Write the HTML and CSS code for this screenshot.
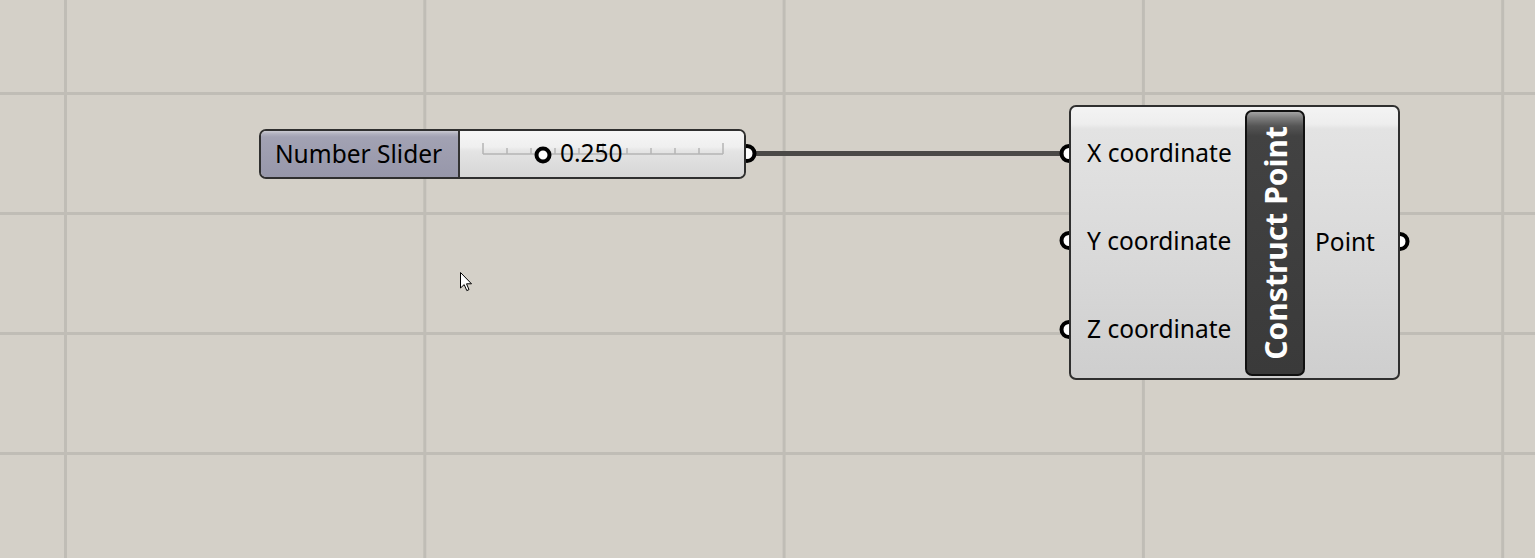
FILE: index.html
```html
<!DOCTYPE html>
<html lang="en">
<head>
<meta charset="utf-8">
<title>Canvas</title>
<link rel="stylesheet" href="styles.css">
</head>
<body>
<div class="canvas">
  <svg class="wires" width="1535" height="558" viewBox="0 0 1535 558">
    <line x1="748" y1="153.5" x2="1066" y2="153.5" stroke="#4a4946" stroke-width="5"/>
    <circle cx="747" cy="153.5" r="7.5" fill="#ffffff" stroke="#000000" stroke-width="4"/>
    <circle cx="1069" cy="153.5" r="7.5" fill="#ffffff" stroke="#000000" stroke-width="4"/>
    <circle cx="1069" cy="240.5" r="7.5" fill="#ffffff" stroke="#000000" stroke-width="4"/>
    <circle cx="1069" cy="329.5" r="7.5" fill="#ffffff" stroke="#000000" stroke-width="4"/>
    <circle cx="1400" cy="241.5" r="7.5" fill="#ffffff" stroke="#000000" stroke-width="4"/>
  </svg>

  <div class="node slider">
    <div class="slider-label">Number Slider</div>
    <div class="slider-body">
      <svg class="ruler" width="286" height="45" viewBox="0 0 286 45">
        <g stroke="#b4b4b4" stroke-width="1.5" fill="none">
          <line x1="23" y1="23" x2="263" y2="23"/>
          <line x1="23" y1="12" x2="23" y2="23"/>
          <line x1="263" y1="12" x2="263" y2="23"/>
          <line x1="47" y1="17" x2="47" y2="23"/>
          <line x1="71" y1="17" x2="71" y2="23"/>
          <line x1="95" y1="17" x2="95" y2="23"/>
          <line x1="119" y1="17" x2="119" y2="23"/>
          <line x1="143" y1="12" x2="143" y2="23"/>
          <line x1="167" y1="17" x2="167" y2="23"/>
          <line x1="191" y1="17" x2="191" y2="23"/>
          <line x1="215" y1="17" x2="215" y2="23"/>
          <line x1="239" y1="17" x2="239" y2="23"/>
        </g>
        <circle cx="83" cy="24" r="6.5" fill="#ffffff" stroke="#000000" stroke-width="4"/>
      </svg>
      <span class="slider-value">0.250</span>
    </div>
  </div>

  <div class="node component">
    <div class="inputs">
      <div class="param">X coordinate</div>
      <div class="param">Y coordinate</div>
      <div class="param">Z coordinate</div>
    </div>
    <div class="title-bar"><span class="title">Construct Point</span></div>
    <div class="outputs">
      <div class="param">Point</div>
    </div>
  </div>

  <svg class="cursor" width="14" height="22" viewBox="0 0 14 22">
    <path d="M0.5 0.5 L0.5 16 L4.2 12.6 L6.8 18.6 L9 17.6 L6.5 11.8 L11.5 11.8 Z" fill="#ffffff" stroke="#000000" stroke-width="1" stroke-linejoin="miter"/>
  </svg>
</div>
</body>
</html>
```

FILE: styles.css
```css
html, body {
  margin: 0;
  padding: 0;
}

body {
  font-family: "Noto Sans", "Open Sans", "DejaVu Sans", sans-serif;
  color: #000;
}

.canvas {
  position: relative;
  width: 1535px;
  height: 558px;
  overflow: hidden;
  background-color: #d4d0c8;
  background-image:
    linear-gradient(to right, #c0bdb6 0, #c0bdb6 3px, transparent 3px),
    linear-gradient(to bottom, #c0bdb6 0, #c0bdb6 3px, transparent 3px);
  background-size: 359.3px 100%, 100% 120px;
  background-position: 64px 0, 0 92px;
}

.wires {
  position: absolute;
  left: 0;
  top: 0;
}

.node {
  position: absolute;
  box-sizing: border-box;
  border: 2px solid #2f2f2f;
  border-radius: 7px;
  overflow: hidden;
}

/* Number slider */
.slider {
  left: 259px;
  top: 129px;
  width: 487px;
  height: 50px;
  display: flex;
}

.slider-label {
  width: 199px;
  flex: none;
  box-sizing: border-box;
  border-right: 2px solid #333;
  background: linear-gradient(to bottom, #c9c9d1 0, #b0b0be 3px, #a2a2b3 6px, #9797aa 100%);
  font-size: 24.5px;
  display: flex;
  align-items: center;
  padding-left: 14px;
  padding-bottom: 2px;
  white-space: nowrap;
}

.slider-body {
  flex: 1;
  position: relative;
  background: linear-gradient(to bottom, #f6f6f6 0, #efefef 16px, #e4e4e4 20px, #d6d6d6 100%);
}

.ruler {
  position: absolute;
  left: 0;
  top: 0;
}

.slider-value {
  position: absolute;
  left: 100px;
  top: 7px;
  font-size: 24.5px;
  line-height: 30px;
}

/* Construct Point component */
.component {
  left: 1069px;
  top: 105px;
  width: 331px;
  height: 275px;
  display: flex;
  background: linear-gradient(to bottom, #f3f3f3 0, #eeeeee 17px, #e3e3e3 22px, #d8d8d8 60%, #cecece 100%);
}

.inputs {
  width: 174px;
  flex: none;
  display: flex;
  flex-direction: column;
  padding-top: 1px;
  padding-left: 16px;
  box-sizing: border-box;
}

.inputs .param {
  height: 88px;
  display: flex;
  align-items: center;
}

.param {
  font-size: 24.5px;
  white-space: nowrap;
}

.title-bar {
  width: 60px;
  flex: none;
  box-sizing: border-box;
  margin: 3px 0 2px;
  border: 2px solid #111;
  border-radius: 7px;
  background: linear-gradient(to bottom, #a2a2a2 0, #7c7c7c 6px, #555555 14px, #424242 24px, #3a3a3a 100%);
  display: flex;
  align-items: center;
  justify-content: center;
}

.title {
  writing-mode: vertical-rl;
  transform: rotate(180deg);
  color: #ffffff;
  font-weight: 700;
  font-size: 30px;
  white-space: nowrap;
}

.outputs {
  flex: 1;
  display: flex;
  align-items: center;
  padding-left: 10px;
  padding-bottom: 2px;
}

.cursor {
  position: absolute;
  left: 460px;
  top: 272px;
}
```
